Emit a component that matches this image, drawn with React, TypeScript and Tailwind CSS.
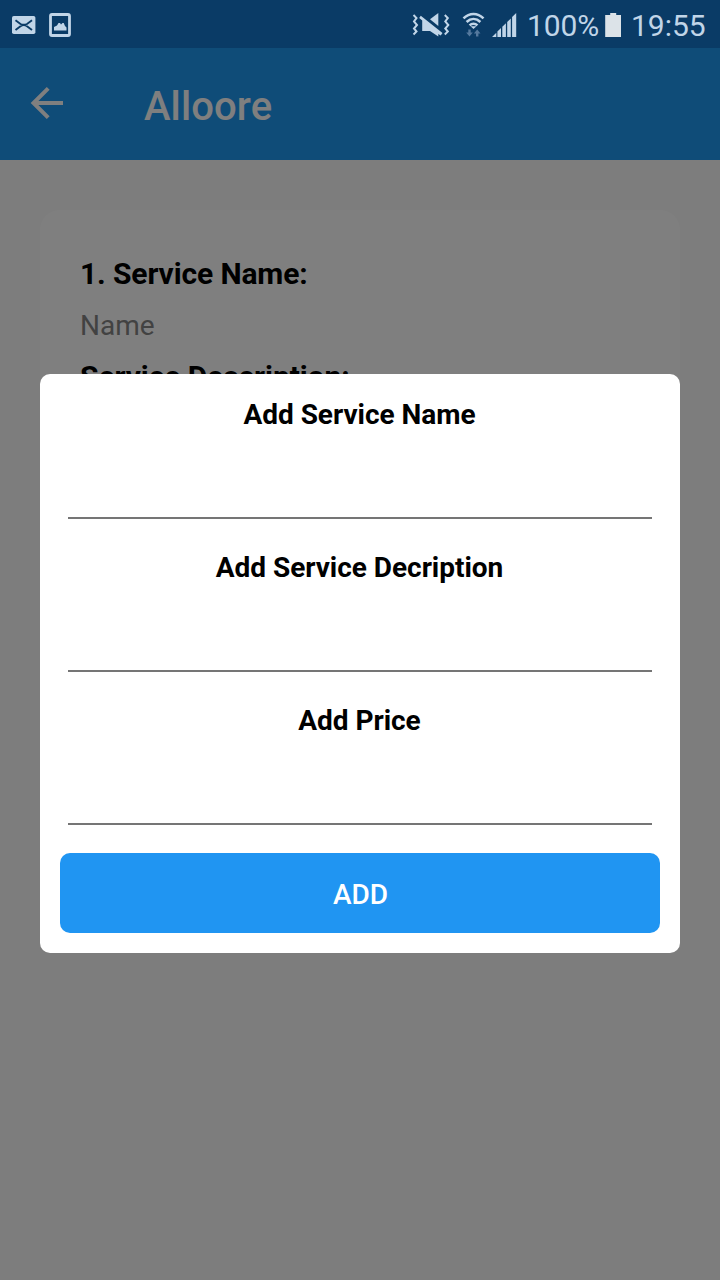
import { useState } from "react";

const fields = ["Add Service Name", "Add Service Decription", "Add Price"];

function StatusBar() {
  return (
    <div className="relative z-20 flex h-12 items-center justify-between bg-[#0a3b66] text-[#c1d5e8]">
      <svg width="80" height="48" viewBox="0 0 80 48" fill="none" className="shrink-0">
        <rect x="12" y="16" width="23.4" height="18" rx="1.8" fill="currentColor" />
        <path d="M15.500 20.300l5 3.700c2 1 4.500 1 6.500 0l5-3.700M15.500 30l5-3.800c2-1.400 4.500-1.400 6.500 0l5 3.800" stroke="#0a3b66" strokeWidth="1.900" />
        <rect x="50.500" y="14.500" width="19" height="21" rx="1.500" stroke="currentColor" strokeWidth="2.800" />
        <path d="M54 30.500v-3.500l3-1.500 1.500-2.500h1.500l1 1.500 1.500-1.500h1.200l1.300 3 1.500 1.500v3z" fill="currentColor" />
      </svg>

      <div className="flex items-center">
        <svg width="120" height="48" viewBox="406 0 120 48" fill="none" className="shrink-0">
          {/* muted speaker with vibration marks */}
          <path d="M413.500 15l3 3-2.500 3.500 3 3.500-3 3.500 2.500 3-3 3M444.800 15l3 3-2.500 3.500 3 3.500-3 3.500 2.500 3-3 3" stroke="currentColor" strokeWidth="2" />
          <path d="M430 19.200L438.300 13v13z" fill="currentColor" />
          <path d="M420.800 15.800L442.500 33l-1.800 2.600-2.400-1.600v2.500L430 31h-7.800v-10.500l-3-2.400z" fill="currentColor" />

          <path d="M463.500 18.400c6-5.800 14-5.800 20 0M466.600 22c4.200-4 9.600-4 13.800 0M469.600 25.400c2.300-2.200 5.500-2.200 7.800 0" stroke="currentColor" strokeWidth="2.600" />
          <path d="M470.500 26.200h6l-3 2.800z" fill="currentColor" />
          <path d="M468.300 29.500h2.400v3h2.100l-3.300 4-3.300-4h2.100zM476 36.500h2.400v-3h2.100l-3.300-4-3.300 4h2.100z" fill="#55799e" />

          <path d="M492 37l4.300-4.200V37zM497.400 31.600l3.600-3.600v9h-3.600zM502.300 26.800l3.600-3.600V37h-3.600zM507.200 22l3.600-3.600V37h-3.600zM512.100 17.100l4.100-4.100v24h-4.100z" fill="currentColor" />
        </svg>
        <span className="w-[79px] pl-px pt-1 text-[30px] leading-[44px] tracking-[-0.1px]">100%</span>
        <svg width="16" height="48" viewBox="605 0 16 48" className="shrink-0">
          <path d="M605.200 15h5v-2h6v2h4.800v22h-15.800z" fill="#dce3e8" />
        </svg>
        <span className="w-[99px] pl-[10px] pt-1 text-[30px] leading-[44px]">19:55</span>
      </div>
    </div>
  );
}

function Header() {
  return (
    <header className="flex h-28 items-center bg-[#1e98f0] text-white">
      <svg width="64" height="112" viewBox="0 48 64 112" fill="none">
        <path d="M48.200 88.300L33.500 103l14.700 14.700M33 103h30" stroke="currentColor" strokeWidth="4" />
      </svg>
      <h1 className="ml-20 pt-[5px] text-[40px] font-medium leading-[48px] tracking-[0.1px]">Alloore</h1>
    </header>
  );
}

function AddServiceDialog({ onAdd }: { onAdd: (values: string[]) => void }) {
  const [values, setValues] = useState(fields.map(() => ""));

  return (
    <form
      className="w-[640px] rounded-[10px] bg-white px-5 pb-5"
      onSubmit={(e) => {
        e.preventDefault();
        onAdd(values);
      }}
    >
      {fields.map((field, i) => (
        <label key={field} className="block h-[153px] px-2 pt-6">
          <span className="block pr-px text-center text-[28px] font-bold leading-[33px] tracking-[-0.03px] text-black">{field}</span>
          <input
            value={values[i]}
            onChange={(e) => setValues(values.map((v, j) => (j === i ? e.target.value : v)))}
            className="block h-[88px] w-full border-b-2 border-[#757575] pt-6 text-[28px] outline-none"
          />
        </label>
      ))}
      <button type="submit" className="mt-5 block h-20 w-full rounded-[10px] bg-[#2095f2] pl-px pt-[3px] text-[28px] font-medium leading-none text-white">
        ADD
      </button>
    </form>
  );
}

export default function App() {
  const [services, setServices] = useState<string[][]>([]);

  return (
    <div className="relative h-[1280px] w-[720px] overflow-hidden bg-[#fafafa] font-['Roboto',sans-serif]">
      <StatusBar />
      <Header />

      <main className="px-10 pt-[50px]">
        <section className="h-[480px] rounded-[20px] bg-white px-10 pt-[46px] text-black">
          <h2 className="text-[30px] font-bold leading-[36px] tracking-[-0.12px]">1. Service Name:</h2>
          <p className="mt-[17px] text-[28px] leading-[34px] text-[#858585]">Name</p>
          <h2 className="mt-[16px] text-[30px] font-bold leading-[36px] tracking-[-0.08px]">Service Description:</h2>
        </section>
      </main>

      {/* dimmed backdrop with the dialog on top */}
      <div className="absolute inset-0 z-10 flex flex-col items-center bg-black/50 pt-[374px]">
        <AddServiceDialog onAdd={(values) => setServices([...services, values])} />
      </div>
    </div>
  );
}
